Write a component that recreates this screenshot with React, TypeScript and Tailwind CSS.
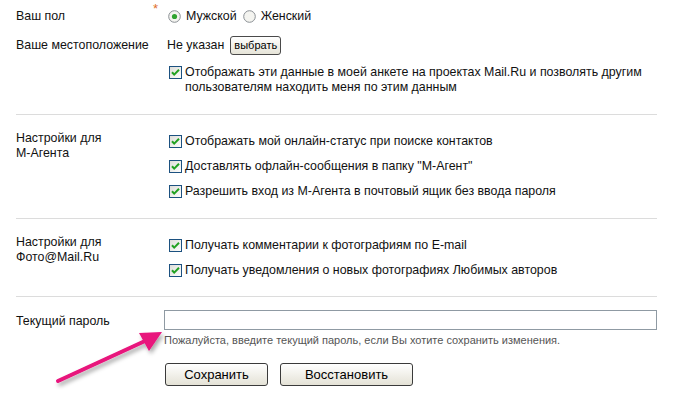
import React from "react";

const font = { fontFamily: '"Liberation Sans", Arial, sans-serif' };

function Check() {
  return (
    <svg width="13" height="13" viewBox="0 0 13 13" className="shrink-0">
      <defs>
        <linearGradient id="cbg" x1="0" y1="0" x2="1" y2="1">
          <stop offset="0" stopColor="#dcdcd6" />
          <stop offset="1" stopColor="#ffffff" />
        </linearGradient>
      </defs>
      <rect x="0.5" y="0.5" width="12" height="12" fill="url(#cbg)" stroke="#1c5180" />
      <path d="M3 6.2 L5.2 8.6 L10 3.8" fill="none" stroke="#21a121" strokeWidth="2" />
    </svg>
  );
}

function Radio({ on }: { on?: boolean }) {
  return (
    <svg width="13" height="13" viewBox="0 0 13 13" className="shrink-0">
      <circle cx="6.5" cy="6.5" r="5.8" fill="#f4f4f0" stroke="#8a8f94" />
      {on && <circle cx="6.5" cy="6.5" r="2.6" fill="#2fa32f" />}
    </svg>
  );
}

function CheckRow({ children }: { children: React.ReactNode }) {
  return (
    <div className="flex items-start gap-[3px] whitespace-nowrap leading-[15px]">
      <div className="pt-px">
        <Check />
      </div>
      <div>{children}</div>
    </div>
  );
}

function Section({
  label,
  children,
  labelPt,
  contentPt,
  pb,
}: {
  label: React.ReactNode;
  children: React.ReactNode;
  labelPt: string;
  contentPt: string;
  pb: string;
}) {
  return (
    <div className={`flex border-b border-[#dcdcdc] ${pb}`}>
      <div className={`w-[148px] shrink-0 leading-[15px] ${labelPt}`}>{label}</div>
      <div className={`flex flex-col gap-[10px] pl-[5px] ${contentPt}`}>{children}</div>
    </div>
  );
}

export default function App() {
  return (
    <div
      className="relative h-[396px] w-[681px] overflow-hidden bg-white pl-4 pr-6 text-[12.4px] text-[#111]"
      style={font}
    >
      {/* section 1 */}
      <div className="border-b border-[#dcdcdc] pb-[19px]">
        <div className="mt-[6px] flex h-5 items-center">
          <div className="w-[137px] shrink-0">Ваш пол</div>
          <div className="relative -top-[7px] w-[15px] text-[13px] text-[#e0702a]">*</div>
          <div className="flex items-center pt-px">
            <Radio on />
            <span className="ml-[5px]">Мужской</span>
            <span className="ml-[6px]">
              <Radio />
            </span>
            <span className="ml-[5px]">Женский</span>
          </div>
        </div>
        <div className="mt-[9px] flex h-5 items-center">
          <div className="w-[151px] shrink-0">Ваше местоположение</div>
          <span>Не указан</span>
          <button className="ml-[6px] h-[19px] rounded-[3px] border border-[#4a4a4a] bg-gradient-to-b from-white to-[#e6e4d8] px-[3px] text-[11px] leading-[15px] text-black">
            выбрать
          </button>
        </div>
        <div className="mt-[10px] pl-[153px]">
          <CheckRow>
            Отображать эти данные в моей анкете на проектах Mail.Ru и позволять другим
            <br />
            пользователям находить меня по этим данным
          </CheckRow>
        </div>
      </div>

      {/* section 2 */}
      <Section
        label={
          <>
            Настройки для
            <br />
            М-Агента
          </>
        }
        labelPt="pt-4"
        contentPt="pt-[19px]"
        pb="pb-[19px]"
      >
        <CheckRow>Отображать мой онлайн-статус при поиске контактов</CheckRow>
        <CheckRow>Доставлять офлайн-сообщения в папку "М-Агент"</CheckRow>
        <CheckRow>Разрешить вход из М-Агента в почтовый ящик без ввода пароля</CheckRow>
      </Section>

      {/* section 3 */}
      <Section
        label={
          <>
            Настройки для
            <br />
            Фото@Mail.Ru
          </>
        }
        labelPt="pt-4"
        contentPt="pt-[19px]"
        pb="pb-[18px]"
      >
        <CheckRow>Получать комментарии к фотографиям по E-mail</CheckRow>
        <CheckRow>Получать уведомления о новых фотографиях Любимых авторов</CheckRow>
      </Section>

      {/* password */}
      <div className="flex pt-[13px]">
        <div className="w-[148px] shrink-0 pt-[4px] leading-[15px]">Текущий пароль</div>
        <div className="flex flex-1 flex-col">
          <input
            type="password"
            className="h-5 w-full border border-[#8f9aa3] bg-white outline-none"
          />
          <div className="mt-[3px] text-[11px] leading-[14px] text-[#555]">
            Пожалуйста, введите текущий пароль, если Вы хотите сохранить изменения.
          </div>
          <div className="mt-[16px] flex gap-3 pl-px">
            <button className="h-[23px] w-[103px] rounded-[3px] border border-[#3a3a3a] bg-gradient-to-b from-white to-[#e4e2d6] text-[13px] text-black">
              Сохранить
            </button>
            <button className="h-[23px] w-[133px] rounded-[3px] border border-[#3a3a3a] bg-gradient-to-b from-white to-[#e4e2d6] text-[13px] text-black">
              Восстановить
            </button>
          </div>
        </div>
      </div>

      {/* pink arrow */}
      <svg
        className="absolute left-0 top-0"
        width="681"
        height="396"
        viewBox="0 0 681 396"
        style={{ pointerEvents: "none" }}
      >
        <defs>
          <filter id="sh" x="-20%" y="-20%" width="140%" height="140%">
            <feDropShadow dx="2" dy="3" stdDeviation="2" floodColor="#000" floodOpacity="0.35" />
          </filter>
        </defs>
        <g filter="url(#sh)">
          <line x1="58" y1="381" x2="145" y2="341" stroke="#e8137c" strokeWidth="4" strokeLinecap="round" />
          <path d="M162 332 L139 333 L149 351 Z" fill="#e8137c" />
        </g>
      </svg>
    </div>
  );
}
